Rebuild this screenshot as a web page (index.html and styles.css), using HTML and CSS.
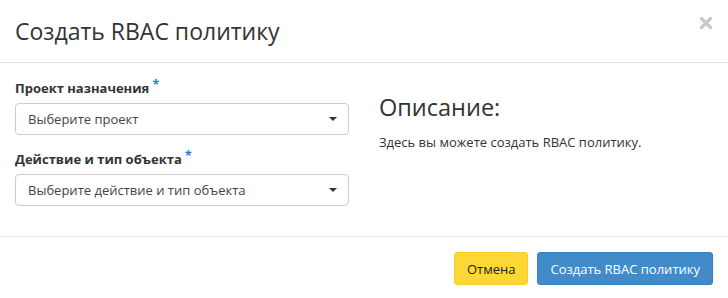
FILE: index.html
```html
<html>
<head>
	<meta charset="utf-8">
	<link rel="stylesheet" href="styles.css">
</head>
<body>
	<div class="modal">
		<div class="modal-header">
			<span class="close"><svg width="12" height="12" viewBox="0 0 12 12"><path d="M1.5 1.5 L10.5 10.5 M10.5 1.5 L1.5 10.5" stroke="#c8c8c8" stroke-width="3.2" stroke-linecap="round"/></svg></span>
			<h3 class="modal-title">Создать RBAC политику</h3>
		</div>
		<div class="modal-body">
			<div class="row">
				<div class="col">
					<div class="form-group">
						<label class="required">Проект назначения</label>
						<div class="select"><span>Выберите проект</span><i class="caret"></i></div>
					</div>
					<div class="form-group">
						<label class="required">Действие и тип объекта</label>
						<div class="select"><span>Выберите действие и тип объекта</span><i class="caret"></i></div>
					</div>
				</div>
				<div class="col">
					<h3 class="help-title">Описание:</h3>
					<p class="help-text">Здесь вы можете создать RBAC политику.</p>
				</div>
			</div>
		</div>
		<div class="modal-footer">
			<button class="btn btn-cancel">Отмена</button>
			<button class="btn btn-primary">Создать RBAC политику</button>
		</div>
	</div>
</body>
</html>
```

FILE: styles.css
```css
*					{ box-sizing: border-box; }
body				{ margin: 0; padding: 0; background: #fff; color: #333;
					  font: 13px/1.42857 "Open Sans", "DejaVu Sans", sans-serif; }
.modal				{ width: 728px; }

.modal-header		{ padding: 15px; border-bottom: 1px solid #e5e5e5; }
.modal-title		{ margin: 0; font-size: 23px; font-weight: normal; line-height: 32px; color: #333; }
.close				{ float: right; margin: 2px 1px 0 0; line-height: 0; }

.modal-body			{ padding: 16px 15px 15px; }
.row				{ display: flex; margin: 0 -15px; }
.col				{ flex: 1; padding: 0 15px; }

.form-group			{ margin-bottom: 15px; }
label				{ display: block; margin-bottom: 5px; font-weight: bold; line-height: 19px; }
label.required:after { content: "*"; color: #2a7fd4; margin-left: 3px; font-size: 13px;
					  vertical-align: top; position: relative; top: -4px; }

.select				{ display: flex; align-items: center; justify-content: space-between;
					  height: 32px; padding: 0 11px 0 12px; border: 1px solid #ccc; border-radius: 4px;
					  color: #444; }
.caret				{ width: 0; height: 0; border-top: 4px solid #333;
					  border-left: 4px solid transparent; border-right: 4px solid transparent; }

.help-title			{ margin: 14px 0 12px; font-size: 23.5px; font-weight: normal; line-height: 28px; color: #333; }
.help-text			{ margin: 0; font-size: 13px; line-height: 18px; color: #333; }

.modal-footer		{ display: flex; justify-content: flex-end; gap: 9px;
					  padding: 15px; border-top: 1px solid #e5e5e5; }
.btn				{ height: 33px; padding: 0 12px; border: 1px solid transparent; border-radius: 3px;
					  font: 13px "Open Sans", "DejaVu Sans", sans-serif; }
.btn-cancel			{ background: #fdd835; border-color: #f5cf2b; color: #222; }
.btn-primary		{ background: #428bca; border-color: #3b80bd; color: #fff; }
```
